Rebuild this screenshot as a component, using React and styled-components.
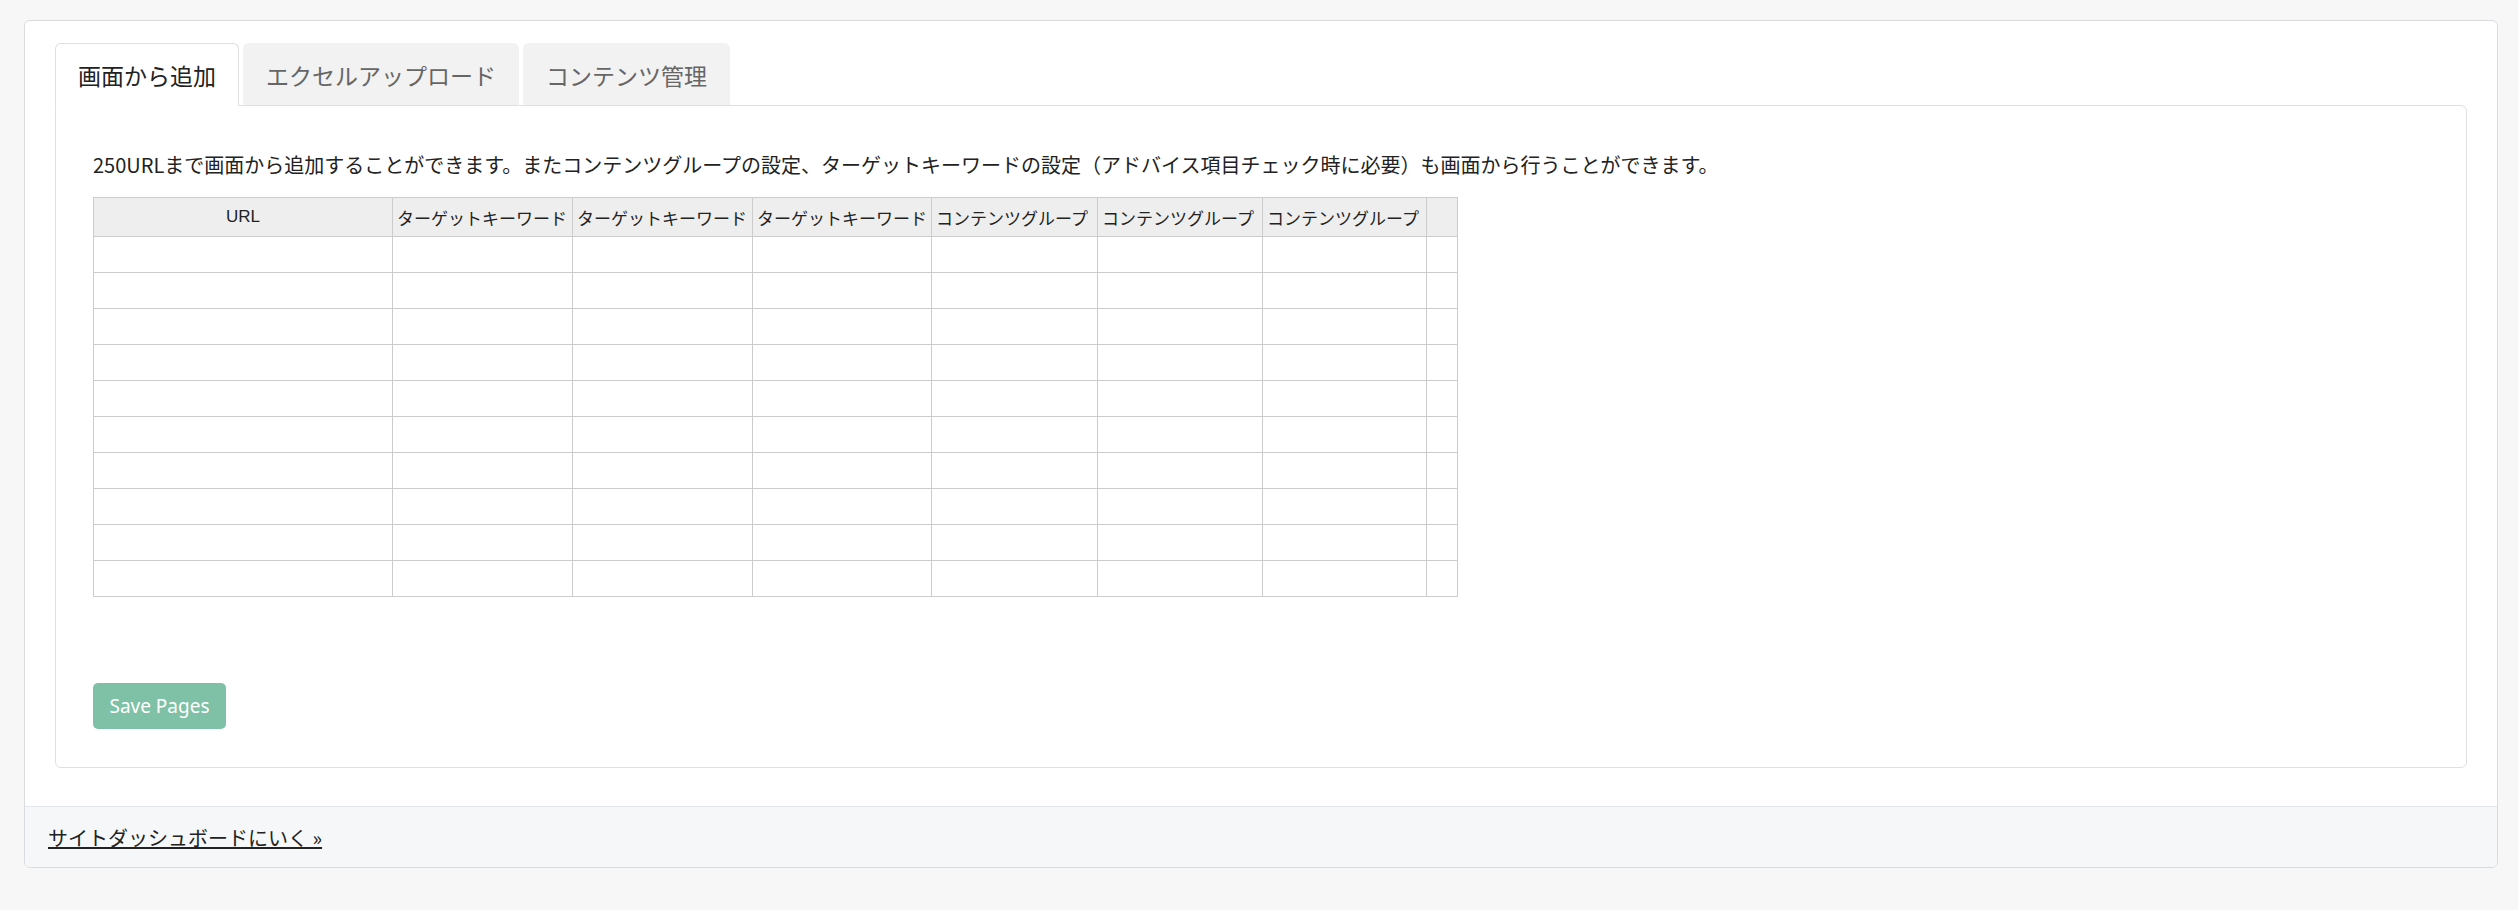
import React from "react";
import styled, { createGlobalStyle } from "styled-components";

const Global = createGlobalStyle`
  html, body { margin: 0; padding: 0; background: #f7f7f7; }
  body { font-family: "Noto Sans", "Noto Sans CJK JP", sans-serif; color: #212529; }
`;

const Page = styled.div`
  padding: 20px 20px 40px 24px;
`;
const Card = styled.div`
  width: 2474px;
  box-sizing: border-box;
  background: #fff;
  border: 1px solid #d8dce0;
  border-radius: 6px;
  overflow: hidden;
`;
const CardBody = styled.div`
  padding: 22px 30px 38px 30px;
`;
const Tabs = styled.div`
  display: flex;
  gap: 4px;
  margin-bottom: -1px;
  position: relative;
  z-index: 1;
`;
const Tab = styled.div`
  height: 63px;
  box-sizing: border-box;
  padding: 0 22px;
  display: flex;
  align-items: center;
  font-size: 23px;
  font-family: "Noto Sans CJK JP", sans-serif;
  border-radius: 6px 6px 0 0;
  border: 1px solid ${p => (p.$active ? "#dcdfe3" : "#f2f2f2")};
  border-bottom-color: ${p => (p.$active ? "#fff" : "#dcdfe3")};
  background: ${p => (p.$active ? "#fff" : "#f2f2f2")};
  color: ${p => (p.$active ? "#222" : "#666")};
`;
const Pane = styled.div`
  border: 1px solid #dcdfe3;
  border-radius: 0 6px 6px 6px;
  padding: 44px 37px 60px 37px;
  height: 663px;
  box-sizing: border-box;
`;
const Intro = styled.p`
  margin: 0 0 17px;
  font-size: 20px;
  line-height: 30px;
  font-family: "Noto Sans CJK JP", sans-serif;
  color: #222;
`;
const Table = styled.table`
  border-collapse: collapse;
  table-layout: fixed;
  width: 1365px;
  font-family: "Liberation Sans", "Noto Sans CJK JP", sans-serif;
`;
const Th = styled.th`
  height: 38px;
  background: #eeeeee;
  border: 1px solid #cccccc;
  font-size: 17px;
  font-weight: normal;
  color: #222;
  padding: 0 4px;
  white-space: nowrap;
  overflow: hidden;
  text-align: ${p => (p.$center ? "center" : "left")};
`;
const Td = styled.td`
  height: 33px;
  border: 1px solid #cccccc;
`;
const Button = styled.button`
  margin-top: 86px;
  width: 133px;
  height: 46px;
  border: none;
  border-radius: 5px;
  background: #7fc1a6;
  color: #fff;
  font-size: 19px;
  font-family: "Noto Sans", sans-serif;
`;
const Footer = styled.div`
  background: #f6f7f9;
  border-top: 1px solid #e3e6ea;
  height: 61px;
  box-sizing: border-box;
  padding: 0 23px;
  display: flex;
  align-items: center;
`;
const Link = styled.a`
  color: #222;
  text-decoration: underline;
  font-size: 20px;
  font-family: "Noto Sans CJK JP", sans-serif;
`;

const cols = [
  ["URL", 299, true],
  ["ターゲットキーワード", 180],
  ["ターゲットキーワード", 180],
  ["ターゲットキーワード", 179],
  ["コンテンツグループ", 166],
  ["コンテンツグループ", 165],
  ["コンテンツグループ", 164],
  ["", 31],
];

export default function App() {
  return (
    <Page>
      <Global />
      <Card>
        <CardBody>
          <Tabs>
            <Tab $active>画面から追加</Tab>
            <Tab>エクセルアップロード</Tab>
            <Tab>コンテンツ管理</Tab>
          </Tabs>
          <Pane>
            <Intro>
              250URLまで画面から追加することができます。またコンテンツグループの設定、ターゲットキーワードの設定（アドバイス項目チェック時に必要）も画面から行うことができます。
            </Intro>
            <Table>
              <colgroup>
                {cols.map((c, i) => (
                  <col key={i} style={{ width: c[1] }} />
                ))}
              </colgroup>
              <thead>
                <tr>
                  {cols.map((c, i) => (
                    <Th key={i} $center={c[2]}>{c[0]}</Th>
                  ))}
                </tr>
              </thead>
              <tbody>
                {Array.from({ length: 10 }).map((_, r) => (
                  <tr key={r}>
                    {cols.map((_, i) => (
                      <Td key={i} />
                    ))}
                  </tr>
                ))}
              </tbody>
            </Table>
            <Button>Save Pages</Button>
          </Pane>
        </CardBody>
        <Footer>
          <Link href="#">サイトダッシュボードにいく »</Link>
        </Footer>
      </Card>
    </Page>
  );
}
